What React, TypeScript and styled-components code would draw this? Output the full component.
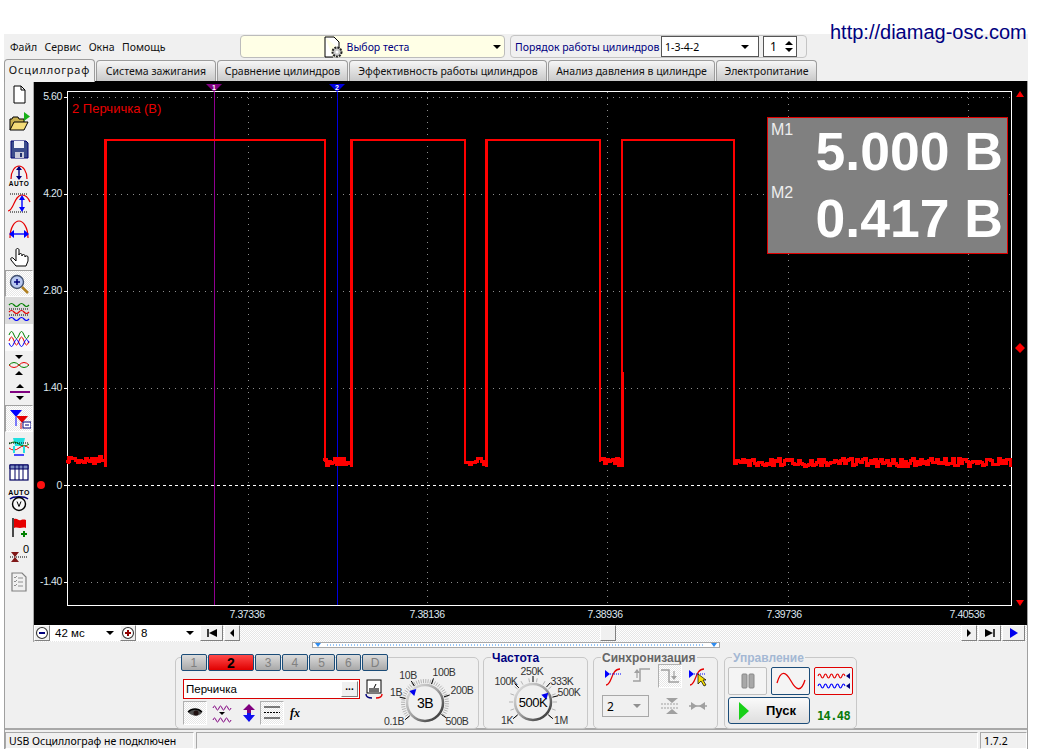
import React from 'react';
import styled, { createGlobalStyle } from 'styled-components';

const UI_FONT = '"Noto Sans", "Liberation Sans", sans-serif';
const ARIAL = '"Liberation Sans", Arial, sans-serif';
const dither = 'repeating-conic-gradient(#ffffff 0 25%, #e6e6e6 0 50%) 0 0 / 2px 2px';

const GlobalStyle = createGlobalStyle`
  html, body { margin: 0; padding: 0; background: #ffffff; }
  body { font-family: ${UI_FONT}; font-size: 10.5px; color: #000; }
  svg { display: block; }
`;

const Page = styled.div`
  position: relative;
  width: 1040px;
  height: 754px;
  overflow: hidden;
  padding-top: 34px;
  box-sizing: border-box;
`;

const SiteLink = styled.div`
  position: absolute;
  left: 830px;
  top: 21px;
  font: 20px ${ARIAL};
  color: #000080;
  z-index: 2;
`;

const Window = styled.div`
  margin-left: 4px;
  width: 1024px;
  height: 715px;
  background: #f0f0f0;
  display: flex;
  flex-direction: column;
`;

/* top row */
const TopRow = styled.div`
  height: 24px;
  display: flex;
  align-items: center;
  padding-top: 1px;
  box-sizing: border-box;
`;

const Menu = styled.div`
  width: 236px;
  display: flex;
  gap: 7.5px;
  padding: 0 0 0 6px;
  box-sizing: border-box;
  color: #111;
`;

const TestCombo = styled.div`
  position: relative;
  width: 265px;
  height: 23px;
  background: #ffffe6;
  border: 1px solid #bcbcbc;
  border-radius: 4px;
  box-sizing: border-box;
  display: flex;
  align-items: center;
  justify-content: center;
  gap: 3px;
  color: #000080;
  padding-right: 14px;
`;

const Arrow = styled.span`
  width: 0;
  height: 0;
  border-left: 4px solid transparent;
  border-right: 4px solid transparent;
  border-top: 4px solid ${p => p.color || '#000'};
`;

const ComboArrow = styled(Arrow)`
  position: absolute;
  right: 3px;
  top: 9px;
`;

const OrderBox = styled.div`
  margin-left: 5px;
  width: 297px;
  height: 23px;
  border: 1px solid #c4c4c4;
  border-radius: 4px;
  box-sizing: border-box;
  display: flex;
  align-items: center;
  padding-left: 4px;
  color: #000080;
`;

const OrderLabel = styled.span`
  width: 146px;
  white-space: nowrap;
`;

const OrderSelect = styled.div`
  width: 98px;
  height: 21px;
  background: #fff;
  border: 1px solid #555;
  box-sizing: border-box;
  display: flex;
  align-items: center;
  justify-content: space-between;
  padding: 0 9px 0 3px;
  color: #000;
`;

const SpinBox = styled.div`
  margin-left: 4px;
  width: 34px;
  height: 21px;
  background: #fff;
  border: 1px solid #555;
  box-sizing: border-box;
  display: flex;
  align-items: center;
  justify-content: space-between;
  padding: 0 3px 0 6px;
  color: #000;
  font-size: 12px;
`;

const SpinArrows = styled.div`
  display: flex;
  flex-direction: column;
  gap: 3px;
`;

const SpinUp = styled(Arrow)`
  display: block;
  border-top: 0;
  border-bottom: 4px solid #000;
`;

const SpinDown = styled(Arrow)`
  display: block;
`;

/* tabs */
const TabBar = styled.div`
  height: 23px;
  display: flex;
  align-items: flex-end;
  position: relative;
`;

const Tab = styled.div<{ $active?: boolean; $w: number }>`
  width: ${p => p.$w}px;
  height: ${p => (p.$active ? 23 : 21)}px;
  margin-right: 1px;
  border: 1px solid #9c9c9c;
  border-bottom: 0;
  border-radius: 4px 4px 0 0;
  box-sizing: border-box;
  display: flex;
  align-items: center;
  justify-content: center;
  white-space: nowrap;
  color: #111;
  background: ${p => (p.$active ? '#f0f0f0' : 'linear-gradient(#f6f6f6, #c9c9c9)')};
  padding-bottom: ${p => (p.$active ? 3 : 0)}px;
  margin-bottom: ${p => (p.$active ? -1 : 0)}px;
  font-size: ${p => (p.$active ? 11 : 10.5)}px;
  letter-spacing: ${p => (p.$active ? 0.8 : 0)}px;
  z-index: ${p => (p.$active ? 1 : 0)};
`;

/* body */
const Body = styled.div`
  flex: 1;
  display: flex;
  flex-direction: column;
  border-left: 1px solid #a0a0a0;
  border-right: 1px solid #a0a0a0;
  min-height: 0;
`;

const Workspace = styled.div`
  display: flex;
  height: 561px;
`;

const SideBar = styled.div`
  width: 29px;
  border-right: 1px solid #a8a8a8;
  box-sizing: border-box;
  display: flex;
  flex-direction: column;
`;

const ToolButton = styled.div<{ $pressed?: boolean; $tone?: string }>`
  height: 27px;
  display: flex;
  align-items: center;
  justify-content: center;
  box-sizing: border-box;
  background: ${p => (p.$pressed ? dither : p.$tone || 'transparent')};
  border-top: ${p => (p.$pressed ? '1px solid #a0a0a0' : '0')};
  border-left: ${p => (p.$pressed ? '1px solid #a0a0a0' : '0')};
  border-right: ${p => (p.$pressed ? '1px solid #fff' : '0')};
  border-bottom: ${p => (p.$pressed ? '1px solid #fff' : '0')};
`;

const ScopeColumn = styled.div`
  flex: 1;
  display: flex;
  flex-direction: column;
  min-width: 0;
`;

const Plot = styled.div`
  position: relative;
  height: 544px;
  background: #000;
`;

const TraceName = styled.div`
  position: absolute;
  left: 38px;
  top: 20px;
  font: 13px ${ARIAL};
  color: #e80000;
`;

const Readout = styled.div`
  position: absolute;
  left: 733px;
  top: 36px;
  width: 241px;
  height: 137px;
  background: #808080;
  border: 1px solid #e00000;
  box-sizing: border-box;
  color: #fff;
  font-family: ${ARIAL};
`;

const ReadoutRow = styled.div`
  height: 67px;
  display: flex;
  justify-content: space-between;
  padding: 0 4px 0 3px;
`;

const ReadoutTag = styled.span<{ $up?: number }>`
  font-size: 16px;
  line-height: 18px;
  padding-top: 3px;
  margin-top: ${p => -(p.$up || 0)}px;
  color: #eeeeee;
`;

const ReadoutValue = styled.span`
  font-size: 53.5px;
  font-weight: 700;
  line-height: 66px;
  white-space: nowrap;
  padding-top: 1px;
`;

/* strip under the plot */
const NavRow = styled.div`
  height: 17px;
  display: flex;
  background: ${dither};
`;

const NavGroup = styled.div<{ $w: number }>`
  width: ${p => p.$w}px;
  height: 16px;
  background: #fff;
  display: flex;
  align-items: center;
  justify-content: space-between;
  padding-right: 6px;
  box-sizing: border-box;
  font: 11.5px ${ARIAL};
`;

const NavLabel = styled.div`
  display: flex;
  align-items: center;
  gap: 4px;
`;

const NavButton = styled.div<{ $w: number }>`
  width: ${p => p.$w}px;
  height: 16px;
  background: #f0f0f0;
  border: 1px solid;
  border-color: #fff #808080 #808080 #fff;
  box-sizing: border-box;
  display: flex;
  align-items: center;
  justify-content: center;
  margin-right: 1px;
`;

const NavSpacer = styled.div<{ $w: number }>`
  width: ${p => p.$w}px;
`;

/* lower panel */
const Splitter = styled.div`
  margin: 0 0 0 307px;
  width: 408px;
  height: 6px;
  border: 1px solid #a8a8a8;
  box-sizing: border-box;
  background: #fff;
  display: flex;
  align-items: center;
`;

const Controls = styled.div`
  height: 82px;
  padding: 9px 0 0 170px;
  box-sizing: border-box;
  display: flex;
  align-items: flex-start;
  border-bottom: 2px solid #a8a8a8;
`;

const Group = styled.div<{ $w: number; $gap: number }>`
  width: ${p => p.$w}px;
  height: 72px;
  margin-right: ${p => p.$gap}px;
  border: 1px solid #c8c8c8;
  border-radius: 5px;
  box-sizing: border-box;
`;

const GroupTitle = styled.div<{ $color: string }>`
  width: fit-content;
  height: 14px;
  margin: -7px 0 0 7px;
  padding: 0 1px;
  background: #f0f0f0;
  font: 700 12px/14px ${ARIAL};
  color: ${p => p.$color};
`;

const ChannelPanel = styled.div`
  display: flex;
  height: 100%;
`;

const ChannelColumn = styled.div`
  width: 212px;
  flex: none;
  padding-left: 5px;
  box-sizing: border-box;
  display: flex;
  flex-direction: column;
`;

const ChannelTabs = styled.div`
  display: flex;
  gap: 1px;
  margin-top: -4px;
`;

const ChannelTab = styled.div<{ $active?: boolean; $w?: number }>`
  width: ${p => p.$w || 26}px;
  height: 17px;
  border: 1px solid #1b4c78;
  border-radius: 2px;
  box-sizing: border-box;
  display: flex;
  align-items: center;
  justify-content: center;
  font: ${p => (p.$active ? 700 : 400)} ${p => (p.$active ? 14 : 12)}px ${ARIAL};
  color: ${p => (p.$active ? '#000' : '#808080')};
  background: ${p => (p.$active ? 'linear-gradient(#ff4a4a, #e00000)' : 'linear-gradient(#dcdcdc, #a8a8a8)')};
`;

const NameRow = styled.div`
  display: flex;
  align-items: center;
  margin: 8px 0 0 2px;
  gap: 4px;
`;

const NameField = styled.div`
  width: 177px;
  height: 20px;
  border: 1px solid #d80000;
  background: #fff;
  box-sizing: border-box;
  display: flex;
  align-items: center;
  justify-content: space-between;
  padding: 0 1px 0 2px;
  font: 11.5px ${ARIAL};
`;

const MoreButton = styled.div`
  width: 17px;
  height: 16px;
  background: #f0f0f0;
  border: 1px solid;
  border-color: #fff #808080 #808080 #fff;
  box-sizing: border-box;
  text-align: center;
  font: 700 10px/10px ${ARIAL};
`;

const IconRow = styled.div`
  display: flex;
  margin: 2px 0 0 2px;
`;

const SmallTool = styled.div<{ $pressed?: boolean; $w: number }>`
  width: ${p => p.$w}px;
  height: 24px;
  display: flex;
  align-items: center;
  justify-content: center;
  box-sizing: border-box;
  background: ${p => (p.$pressed ? dither : 'transparent')};
  border: ${p => (p.$pressed ? '1px solid' : '0')};
  border-color: #b0b0b0 #fff #fff #b0b0b0;
`;

const DialWrap = styled.div`
  margin-left: -4px;
`;

const SyncGrid = styled.div`
  display: grid;
  grid-template-columns: repeat(4, 28px);
  grid-auto-rows: 24px;
  row-gap: 6px;
  padding: 0 0 0 6px;
  margin-top: -1px;
  justify-items: center;
  align-items: center;
`;

const SyncCombo = styled.div`
  grid-column: span 2;
  justify-self: start;
  margin-left: 2px;
  width: 47px;
  height: 22px;
  border: 1px solid #a8a8a8;
  box-sizing: border-box;
  display: flex;
  align-items: center;
  justify-content: space-between;
  padding: 0 7px 0 4px;
  font-size: 12px;
`;

const ControlGrid = styled.div`
  display: grid;
  grid-template-columns: repeat(3, 39px);
  gap: 2px 4px;
  padding: 2px 0 0 3px;
`;

const ModeButton = styled.div<{ $border: string }>`
  height: 28px;
  border: ${p => (p.$border === 'none' ? '1px solid #c0c0c0' : `1.5px solid ${p.$border}`)};
  border-radius: 2px;
  background: #f4f4f4;
  box-sizing: border-box;
  display: flex;
  align-items: center;
  justify-content: center;
`;

const StartButton = styled.div`
  grid-column: span 2;
  height: 27px;
  border: 1.5px solid #1b4c78;
  border-radius: 3px;
  background: linear-gradient(#fafafa, #dedede);
  box-sizing: border-box;
  display: flex;
  align-items: center;
  gap: 15px;
  padding-left: 8px;
  font: 700 13px ${ARIAL};
`;

const Voltage = styled.div`
  align-self: end;
  text-align: center;
  font: 700 12px/16px "DejaVu Sans Mono", "Liberation Mono", monospace;
  letter-spacing: -0.6px;
  color: #0a7a0a;
`;

/* status bar */
const StatusBar = styled.div`
  flex: 1;
  display: flex;
  gap: 2px;
  padding-top: 2px;
  box-sizing: border-box;
`;

const StatusCell = styled.div<{ $w?: number }>`
  ${p => (p.$w ? `width: ${p.$w}px;` : 'flex: 1;')}
  border: 1px solid;
  border-color: #a8a8a8 #fff #fff #a8a8a8;
  box-sizing: border-box;
  padding-left: 3px;
  display: flex;
  align-items: center;
  white-space: nowrap;
`;

/* ---------- drawings ---------- */
const Ico = ({ s = 24, w, h, children }: { s?: number; w?: number; h?: number; children: React.ReactNode }) => (
  <svg width={w || s} height={h || s} viewBox={`0 0 ${w || s} ${h || s}`} fill="none">
    {children}
  </svg>
);

const RED = '#e60000';
const NAVY = '#00007c';
const BLUE = '#0000ff';

const wave = (x: number, y: number, a: number, n: number, step = 4) => {
  let d = `M${x} ${y}`;
  for (let i = 0; i < n; i++) {
    d += `q${step / 2} ${i % 2 ? a : -a} ${step} 0`;
  }
  return d;
};

const sideIcons: React.ReactNode[] = [
  <Ico key="new"><path d="M7 3h7l4 4v13H7z" fill="#fff" stroke="#000" /><path d="M14 3v4h4" stroke="#000" /></Ico>,
  <Ico key="open">
    <path d="M3 20V9h2l1-2h5l1 2h5v3" fill="#c8b050" stroke="#000" />
    <path d="M3 20l4-8h14l-4 8z" fill="#f4dc78" stroke="#000" />
    <path d="M17 2v9l6-4.500z" fill="#18b018" />
  </Ico>,
  <Ico key="save">
    <path d="M4 4h15l2 2v15H4z" fill="#3c4c8c" stroke="#000070" />
    <path d="M7 4h10v7H7z" fill="#f0f0f8" />
    <path d="M8 15h9v6H8z" fill="#c8c8d8" />
    <path d="M13 16h2v4h-2z" fill="#203070" />
  </Ico>,
  <Ico key="auto">
    <path d="M4 15C4 7 8 2 12 2s8 5 8 13" stroke={RED} strokeWidth="1.200" />
    <path d="M12 3v12" stroke={NAVY} strokeWidth="1.400" />
    <path d="M9 6l3-4 3 4zM9 12l3 4 3-4z" fill={NAVY} />
    <text x="12" y="22" textAnchor="middle" fontSize="6.500" fontWeight="700" fontFamily={ARIAL} letterSpacing="0.6" fill="#000">AUTO</text>
  </Ico>,
  <Ico key="offset">
    <path d="M1 20c6 0 6-16 14-16 4 0 6 2 8 7" stroke={RED} strokeWidth="1.200" />
    <path d="M3 3h18M3 21h18" stroke="#000" strokeDasharray="1 1" />
    <path d="M15 6v12" stroke={BLUE} strokeWidth="1.400" />
    <path d="M12 9l3-5 3 5zM12 16l3 5 3-5z" fill={BLUE} />
  </Ico>,
  <Ico key="span">
    <path d="M3 20C3 9 8 3 12 3s9 6 9 17" stroke={RED} strokeWidth="1.200" />
    <path d="M5 16h14" stroke={BLUE} strokeWidth="1.400" />
    <path d="M7 12l-5 4 5 4zM17 12l5 4-5 4z" fill={BLUE} />
  </Ico>,
  <Ico key="hand">
    <path d="M9 21l-5-6c-1-2 1-3 2-2l3 3V5c0-2 3-2 3 0v5c0-2 3-2 3 0v1c0-2 3-2 3 0v1c0-1.500 3-1.500 3 0v4l-2 5z" fill="#fff" stroke="#000" />
  </Ico>,
  <Ico key="zoom">
    <circle cx="10" cy="10" r="6.500" fill="#b8c8f0" stroke="#405070" strokeWidth="1.400" />
    <path d="M7 10h6M10 7v6" stroke={NAVY} strokeWidth="1.500" />
    <path d="M15 15l6 6" stroke="#b08020" strokeWidth="2.500" />
  </Ico>,
  <Ico key="waves">
    <path d={wave(2, 6, 3, 4, 5)} stroke="#008000" strokeWidth="1.200" />
    <path d="M2 10h20M2 16h20" stroke="#000" strokeDasharray="1 1" />
    <path d={wave(2, 13, 3, 4, 5)} stroke={RED} strokeWidth="1.200" />
    <path d={wave(2, 20, 3, 4, 5)} stroke={BLUE} strokeWidth="1.200" />
  </Ico>,
  <Ico key="overlay">
    <path d={wave(2, 9, 7, 4, 5)} stroke="#008000" />
    <path d={wave(2, 15, 8, 4, 5)} stroke={RED} />
    <path d={wave(2, 17, -7, 4, 5)} stroke={BLUE} />
  </Ico>,
  <Ico key="shrink">
    <path d={wave(2, 12, 5, 2, 10)} stroke="#008000" />
    <path d={wave(2, 12, -5, 2, 10)} stroke={RED} />
    <path d="M8 2h8l-4 4zM8 22h8l-4-4z" fill="#000" />
  </Ico>,
  <Ico key="level">
    <path d="M3 12h20" stroke="#800080" strokeWidth="2" />
    <path d="M9 8l4-4 4 4zM9 16l4 4 4-4z" fill="#000" />
  </Ico>,
  <Ico key="cursors">
    <path d="M3 3h12l-6 7z" fill={BLUE} />
    <path d="M9 10v9" stroke={BLUE} />
    <path d="M9 9h12l-6 7z" fill={RED} />
    <path d="M14 16v6" stroke={RED} />
    <rect x="16" y="15" width="8" height="6" fill="#fff" stroke={NAVY} />
    <path d="M18 18h4" stroke={NAVY} />
  </Ico>,
  <Ico key="mid">
    <path d="M6 4h12l-2 8h-8z" fill="#20e0e0" />
    <path d={wave(2, 10, 4, 2, 10)} stroke="#008000" />
    <path d="M2 9h20" stroke="#000" strokeDasharray="1 1" />
    <path d={wave(2, 14, -4, 2, 10)} stroke={RED} />
    <path d="M7 12v7M17 12v7" stroke="#20e0e0" strokeWidth="2" />
    <path d="M7 21h10" stroke={BLUE} strokeWidth="1.400" />
  </Ico>,
  <Ico key="table">
    <rect x="3" y="4" width="18" height="15" fill="#fff" stroke="#000060" strokeWidth="1.200" />
    <path d="M3 4h18v4H3z" fill="#7c8cc0" stroke="#000060" />
    <path d="M8 4v15M12 4v15M16 4v15" stroke="#000060" />
  </Ico>,
  <Ico key="autovolt">
    <text x="12" y="7" textAnchor="middle" fontSize="7" fontWeight="700" fontFamily={ARIAL} letterSpacing="0.5" fill="#000">AUTO</text>
    <path d="M3 11c3-3 15-3 18 0" stroke={NAVY} strokeWidth="1.400" />
    <circle cx="12" cy="16" r="6.500" fill="#f8f8f8" stroke="#000" strokeWidth="1.400" />
    <path d="M10 13.500l2 5 2-5" stroke="#000" />
  </Ico>,
  <Ico key="flag">
    <path d="M6 3v19" stroke="#000" strokeWidth="1.400" />
    <path d="M7 4c4-1 4 2 7 1s5 0 5 0v8c-3-1-4 0-6 0s-3-1-6 0z" fill={RED} />
    <path d="M17 16v6M14 19h6" stroke="#008000" strokeWidth="2" />
  </Ico>,
  <Ico key="zero">
    <path d="M3 15h18" stroke="#000" strokeDasharray="1 1" />
    <path d="M4 10h8l-4 5zM4 20h8l-4-5z" fill="#801818" />
    <text x="19" y="11" textAnchor="middle" fontSize="11" fontFamily={ARIAL} fill="#000">0</text>
  </Ico>,
  <Ico key="report">
    <path d="M5 4h10l4 4v14H5z" fill="#f0f0f0" stroke="#808080" strokeWidth="1.200" />
    <path d="M7 8l1 1 2-2M7 12l1 1 2-2M7 16l1 1 2-2M11 9h5M11 13h5M11 17h5" stroke="#909090" />
  </Ico>,
];

// blocky noise: each sample holds for 2px, like the sampled trace
const noise = (seedStart: number, x0: number, x1: number, base: number, amp: number) => {
  let seed = seedStart;
  let d = `M${x0} ${base}`;
  for (let x = x0 + 2; x <= x1; x += 2) {
    seed = (seed * 16807) % 2147483647;
    const v = ((seed % 1000) / 1000 - 0.5) * amp * 2;
    d += `V${Math.round(base + v)}H${x}`;
  }
  return d;
};

const gridX = [248, 427, 607, 788, 968];
const gridY = [97, 194, 291, 388, 582];
const xLabels = [
  ['7.37336', 247],
  ['7.38136', 427],
  ['7.38936', 605],
  ['7.39736', 784],
  ['7.40536', 967],
] as const;
const yLabels = [
  ['5.60', 100],
  ['4.20', 197],
  ['2.80', 294],
  ['1.40', 391],
  ['0', 489],
  ['-1.40', 585],
] as const;

const highs: [number, number][] = [
  [105, 325],
  [351, 465],
  [486, 600],
  [622, 734],
];
const lows: [number, number, number][] = [
  [67, 105, 460],
  [324, 351, 461],
  [465, 486, 461],
  [600, 622, 461],
  [734, 1012, 462],
];

const ScopeChart = () => (
  <svg width="993" height="544" viewBox="34 81 993 544" fill="none">
    <g stroke="#8c8c8c" strokeDasharray="1 5" shapeRendering="crispEdges">
      {gridX.map(x => <path key={x} d={`M${x} 92V605`} />)}
      {gridY.map(y => <path key={y} d={`M67 ${y}H1012`} />)}
    </g>
    <path d="M67 485H1012" stroke="#ffffff" strokeDasharray="3 3" shapeRendering="crispEdges" />
    <path d="M214.500 91V605" stroke="#900090" shapeRendering="crispEdges" />
    <path d="M337.500 91V605" stroke="#0000e0" shapeRendering="crispEdges" />
    <rect x="67.500" y="91.500" width="944" height="514" stroke="#fff" shapeRendering="crispEdges" />
    <g stroke="#fff" shapeRendering="crispEdges">
      {[97, 194, 291, 388, 485, 582].map(y => <path key={y} d={`M64 ${y}h3`} />)}
    </g>
    <g fill="#dfe6ee" fontFamily={ARIAL} fontSize="10.500" letterSpacing="-0.400">
      {yLabels.map(([t, y]) => <text key={t} x="62" y={y} textAnchor="end">{t}</text>)}
      {xLabels.map(([t, x]) => <text key={t} x={x} y="618" textAnchor="middle">{t}</text>)}
    </g>
    <g stroke="#ff0000" shapeRendering="crispEdges">
      {lows.map(([a, b, y]) => (
        <path key={a} d={noise(a * 97 + 11, a, b, y, 4)} strokeWidth="3" strokeLinejoin="miter" />
      ))}
      {highs.map(([a, b]) => (
        <g key={a}>
          <path d={`M${a} 140H${b}`} strokeWidth="2" />
          <path d={`M${a} ${a === 622 ? 372 : 139}V467`} strokeWidth="3" />
          <path d={`M${b} 139V462`} strokeWidth="2" />
        </g>
      ))}
      <path d="M622 139V372" strokeWidth="2" />
    </g>
    <path d="M206 84h16l-8 8z" fill="#800080" />
    <text x="214" y="90" textAnchor="middle" fontSize="7" fontWeight="700" fontFamily={ARIAL} fill="#fff">1</text>
    <path d="M329 84h16l-8 8z" fill="#0000e0" />
    <text x="337" y="90" textAnchor="middle" fontSize="7" fontWeight="700" fontFamily={ARIAL} fill="#fff">2</text>
    <path d="M1016 97l4-6 4 6zM1016 600l4 6 4-6zM1020 343l5 5-5 5-5-5z" fill="#ff0000" />
    <circle cx="41" cy="485" r="4" fill="#ff1010" />
    <path d="M67 456h3v8h-3z" fill="#ff0000" />
  </svg>
);

const polar = (cx: number, cy: number, r: number, deg: number) => {
  const a = ((deg - 90) * Math.PI) / 180;
  return [cx + r * Math.cos(a), cy + r * Math.sin(a)];
};

interface DialProps {
  id: string;
  box: string;
  w: number;
  h: number;
  cx: number;
  cy: number;
  r: number;
  value: string;
  valueSize: number;
  marks: { deg: number; label: string; x: number; y: number }[];
  minor: number[];
  pointer: number;
}

const Dial = ({ id, box, w, h, cx, cy, r, value, valueSize, marks, minor, pointer }: DialProps) => {
  const [px, py] = polar(cx, cy, r - 4, pointer);
  return (
    <svg width={w} height={h} viewBox={box} fill="none" style={{ overflow: 'visible' }}>
      <defs>
        <linearGradient id={id} x1="0" y1="0" x2="1" y2="1">
          <stop offset="0" stopColor="#e8e8e8" />
          <stop offset="0.500" stopColor="#a0a0a0" />
          <stop offset="1" stopColor="#202020" />
        </linearGradient>
      </defs>
      {minor.map(d => {
        const [a, b] = polar(cx, cy, r + 2, d);
        const [c, e] = polar(cx, cy, r + 6, d);
        return <path key={d} d={`M${a} ${b}L${c} ${e}`} stroke="#b4b4b4" />;
      })}
      {marks.map(m => {
        const [a, b] = polar(cx, cy, r + 2, m.deg);
        const [c, e] = polar(cx, cy, r + 8, m.deg);
        return <path key={m.deg} d={`M${a} ${b}L${c} ${e}`} stroke="#000" />;
      })}
      <circle cx={cx} cy={cy} r={r} stroke={`url(#${id})`} strokeWidth="2.500" fill="#f0f0f0" />
      <path d={`M${px - 5} ${py - 3}l7 -2 -2 7z`} fill="#0000ee" />
      <text x={cx} y={cy + 5} textAnchor="middle" fontSize={valueSize} fontFamily={ARIAL} fill="#000" letterSpacing="-0.500">{value}</text>
      <g fontSize="10.500" fontFamily={ARIAL} fill="#333" letterSpacing="-0.400">
        {marks.map(m => (
          <text key={m.label} x={m.x} y={m.y} textAnchor="middle">{m.label}</text>
        ))}
      </g>
    </svg>
  );
};

const range = (from: number, to: number, step: number) => {
  const out: number[] = [];
  for (let d = from; d <= to; d += step) out.push(d);
  return out;
};

const CircleButton = ({ plus }: { plus?: boolean }) => (
  <Ico s={14}>
    <circle cx="7" cy="7" r="5.500" fill="#fff" stroke="#333" strokeWidth="1.100" />
    <path d={plus ? 'M4 7h6M7 4v6' : 'M4 7h6'} stroke={plus ? '#900000' : NAVY} strokeWidth="2" />
  </Ico>
);

const NavGlyph = ({ kind }: { kind: 'first' | 'prev' | 'next' | 'last' | 'play' }) => (
  <Ico w={14} h={10}>
    {kind === 'first' && <path d="M3 1v8" stroke="#000" strokeWidth="1.500" />}
    {kind === 'first' && <path d="M12 1v8L4 5z" fill="#000" />}
    {kind === 'prev' && <path d="M9 1v8L5 5z" fill="#000" />}
    {kind === 'next' && <path d="M5 1v8l4-4z" fill="#000" />}
    {kind === 'last' && <path d="M2 1v8l8-4z" fill="#000" />}
    {kind === 'last' && <path d="M11 1v8" stroke="#000" strokeWidth="1.500" />}
    {kind === 'play' && <path d="M3 0v10l8-5z" fill="#0000ee" />}
  </Ico>
);

const App = () => (
  <>
    <GlobalStyle />
    <Page>
      <SiteLink>http://diamag-osc.com</SiteLink>
      <Window>
        <TopRow>
          <Menu>
            <span>Файл</span>
            <span>Сервис</span>
            <span>Окна</span>
            <span>Помощь</span>
          </Menu>
          <TestCombo>
            <Ico s={22}>
              <path d="M3 1h9l5 5v7M3 1v20h8" fill="#fff" stroke="#000" />
              <circle cx="15" cy="16" r="4.500" fill="#c8c8c8" stroke="#222" strokeWidth="2" strokeDasharray="2 1" />
              <circle cx="15" cy="16" r="1.500" fill="#fff" />
            </Ico>
            <span>Выбор теста</span>
            <ComboArrow />
          </TestCombo>
          <OrderBox>
            <OrderLabel>Порядок работы цилиндров</OrderLabel>
            <OrderSelect>
              <span>1-3-4-2</span>
              <Arrow />
            </OrderSelect>
            <SpinBox>
              <span>1</span>
              <SpinArrows>
                <SpinUp />
                <SpinDown />
              </SpinArrows>
            </SpinBox>
          </OrderBox>
        </TopRow>

        <TabBar>
          <Tab $active $w={91}>Осциллограф</Tab>
          <Tab $w={120}>Система зажигания</Tab>
          <Tab $w={131}>Сравнение цилиндров</Tab>
          <Tab $w={198}>Эффективность работы цилиндров</Tab>
          <Tab $w={167}>Анализ давления в цилиндре</Tab>
          <Tab $w={101}>Электропитание</Tab>
        </TabBar>

        <Body>
          <Workspace>
            <SideBar>
              {sideIcons.map((icon, i) => (
                <ToolButton key={i} $pressed={i === 7 || i === 12} $tone={i === 8 ? '#dcdcdc' : i === 9 ? '#fafafa' : undefined}>
                  {icon}
                </ToolButton>
              ))}
            </SideBar>
            <ScopeColumn>
              <Plot>
                <ScopeChart />
                <TraceName>2 Перчичка (В)</TraceName>
                <Readout>
                  <ReadoutRow>
                    <ReadoutTag>M1</ReadoutTag>
                    <ReadoutValue>5.000 В</ReadoutValue>
                  </ReadoutRow>
                  <ReadoutRow>
                    <ReadoutTag $up={4}>M2</ReadoutTag>
                    <ReadoutValue>0.417 В</ReadoutValue>
                  </ReadoutRow>
                </Readout>
              </Plot>
              <NavRow>
                <NavGroup $w={86}>
                  <NavLabel><NavButton $w={16}><CircleButton /></NavButton>42 мс</NavLabel>
                  <Arrow />
                </NavGroup>
                <NavGroup $w={80}>
                  <NavLabel><NavButton $w={16}><CircleButton plus /></NavButton>8</NavLabel>
                  <Arrow />
                </NavGroup>
                <NavButton $w={23}><NavGlyph kind="first" /></NavButton>
                <NavButton $w={16}><NavGlyph kind="prev" /></NavButton>
                <NavSpacer $w={359} />
                <NavButton $w={16} />
                <NavSpacer $w={344} />
                <NavButton $w={16}><NavGlyph kind="next" /></NavButton>
                <NavButton $w={23}><NavGlyph kind="last" /></NavButton>
                <NavButton $w={23}><NavGlyph kind="play" /></NavButton>
              </NavRow>
            </ScopeColumn>
          </Workspace>

          <Splitter>
            <svg width="406" height="4" fill="none">
              <path d="M2 0h6l-3 4zM398 0h6l-3 4z" fill="#2f8cf0" />
              <path d="M14 2H392" stroke="#2f8cf0" strokeDasharray="1 2" />
            </svg>
          </Splitter>

          <Controls>
            <Group $w={304} $gap={4}>
              <ChannelPanel>
                <ChannelColumn>
                  <ChannelTabs>
                    <ChannelTab $w={26}>1</ChannelTab>
                    <ChannelTab $active $w={47}>2</ChannelTab>
                    <ChannelTab>3</ChannelTab>
                    <ChannelTab>4</ChannelTab>
                    <ChannelTab>5</ChannelTab>
                    <ChannelTab>6</ChannelTab>
                    <ChannelTab>D</ChannelTab>
                  </ChannelTabs>
                  <NameRow>
                    <NameField>
                      <span>Перчичка</span>
                      <MoreButton>...</MoreButton>
                    </NameField>
                    <Ico s={20}>
                      <rect x="3" y="1" width="14" height="13" fill="#fff" stroke="#000" />
                      <path d="M5 9h10v4H5z" fill="#707070" />
                      <path d="M10 9L12 5" stroke="#000" />
                      <path d="M2 15c0 3 3 4 6 4" stroke={NAVY} strokeWidth="1.400" />
                      <path d="M18 15c0 3-3 4-6 4" stroke={RED} strokeWidth="1.400" />
                    </Ico>
                  </NameRow>
                  <IconRow>
                    <SmallTool $pressed $w={24}>
                      <Ico s={18}>
                        <path d="M2 8c4-4 10-4 14 0-2 5-10 5-14 0z" fill="#505050" />
                        <circle cx="10" cy="9" r="2.500" fill="#201010" />
                        <path d="M2 8c4-4 10-4 14 0" stroke="#000" strokeWidth="1.400" />
                      </Ico>
                    </SmallTool>
                    <SmallTool $w={30}>
                      <Ico s={22}>
                        <path d={wave(2, 6, 4, 6, 3)} stroke="#800080" />
                        <path d="M8 10h6l-3 3z" fill="#000" />
                        <path d={wave(2, 18, 4, 6, 3)} stroke="#800080" />
                      </Ico>
                    </SmallTool>
                    <SmallTool $w={23}>
                      <Ico s={22}>
                        <path d="M11 2l-6 6h4v4h4V8h4z" fill="#800080" />
                        <path d="M11 20l-6-7h4v-2h4v2h4z" fill="#1010f0" />
                      </Ico>
                    </SmallTool>
                    <SmallTool $pressed $w={24}>
                      <Ico s={20}>
                        <path d="M2 4h16M2 15h16" stroke="#000" />
                        <path d="M2 9.500h16" stroke="#000" strokeDasharray="2 1" />
                      </Ico>
                    </SmallTool>
                    <SmallTool $w={22}>
                      <Ico s={18}>
                        <text x="9" y="13" textAnchor="middle" fontSize="12" fontStyle="italic" fontWeight="700" fontFamily='"Liberation Serif", serif' fill="#000">fx</text>
                      </Ico>
                    </SmallTool>
                  </IconRow>
                </ChannelColumn>
                <DialWrap>
                  <Dial
                    id="voltDial"
                    box="388 658 90 70"
                    w={90}
                    h={70}
                    cx={429}
                    cy={703}
                    r={18}
                    value="3В"
                    valueSize={14}
                    pointer={-50}
                    minor={range(-130, 125, 6)}
                    marks={[
                      { deg: -130, label: '0.1В', x: 398, y: 725 },
                      { deg: -77, label: '1В', x: 400, y: 696 },
                      { deg: -32, label: '10В', x: 412, y: 679 },
                      { deg: 19, label: '100В', x: 448, y: 676 },
                      { deg: 72, label: '200В', x: 466, y: 694 },
                      { deg: 125, label: '500В', x: 461, y: 725 },
                    ]}
                  />
                </DialWrap>
              </ChannelPanel>
            </Group>

            <Group $w={105} $gap={5}>
              <GroupTitle $color="#000080">Частота</GroupTitle>
              <Dial
                id="freqDial"
                box="484 665 103 63"
                w={103}
                h={63}
                cx={533}
                cy={702}
                r={18}
                value="500K"
                valueSize={13}
                pointer={72}
                minor={range(-130, 130, 20)}
                marks={[
                  { deg: -130, label: '1K', x: 507, y: 724 },
                  { deg: -45, label: '100K', x: 506, y: 685 },
                  { deg: 0, label: '250K', x: 532, y: 675 },
                  { deg: 42, label: '333K', x: 562, y: 685 },
                  { deg: 76, label: '500K', x: 569, y: 696 },
                  { deg: 130, label: '1M', x: 561, y: 724 },
                ]}
              />
            </Group>

            <Group $w={125} $gap={6}>
              <GroupTitle $color="#666666">Синхронизация</GroupTitle>
              <SyncGrid>
                <Ico s={22}>
                  <path d="M3 20c6 0 5-16 14-16" stroke={RED} strokeWidth="1.300" />
                  <path d="M3 9h16" stroke={BLUE} strokeDasharray="1 1" />
                  <path d="M2 5v8l5-4z" fill={BLUE} />
                </Ico>
                <Ico s={22}>
                  <path d="M2 16h7V4h10" stroke="#a0a0a0" strokeWidth="1.500" />
                  <path d="M6 5v8" stroke="#a0a0a0" strokeWidth="1.200" />
                  <path d="M3 8l3-4 3 4z" fill="#a0a0a0" />
                </Ico>
                <SmallTool $pressed $w={24}>
                  <Ico s={22}>
                    <path d="M2 5h8v12h10" stroke="#a0a0a0" strokeWidth="1.500" />
                    <path d="M15 6v8" stroke="#a0a0a0" strokeWidth="1.200" />
                    <path d="M12 11l3 4 3-4z" fill="#a0a0a0" />
                  </Ico>
                </SmallTool>
                <Ico s={22}>
                  <path d="M3 20c6 0 5-16 14-16" stroke={RED} strokeWidth="1.300" />
                  <path d="M3 9h16" stroke={BLUE} strokeDasharray="1 1" />
                  <path d="M2 5v8l5-4z" fill={BLUE} />
                  <path d="M11 9v10l3-3 3 5 2-1-3-5h3z" fill="#f8e000" stroke="#000" strokeWidth="0.700" />
                </Ico>
                <SyncCombo>
                  <span>2</span>
                  <Arrow color="#909090" />
                </SyncCombo>
                <Ico s={22}>
                  <path d="M7 3h12l-6 5zM7 19h12l-6-5z" fill="#a0a0a0" />
                  <path d="M2 9h18M2 13h18" stroke="#a0a0a0" strokeDasharray="2 1" />
                </Ico>
                <Ico s={22}>
                  <path d="M2 11h18" stroke="#a0a0a0" strokeWidth="1.500" />
                  <path d="M4 7v8l6-4zM18 7v8l-6-4z" fill="#a0a0a0" />
                </Ico>
              </SyncGrid>
            </Group>

            <Group $w={133} $gap={0}>
              <GroupTitle $color="#a4b8d4">Управление</GroupTitle>
              <ControlGrid>
                <ModeButton $border="none">
                  <Ico s={20}>
                    <rect x="4" y="3" width="5" height="14" rx="1" fill="#a8a8a8" stroke="#888" />
                    <rect x="11" y="3" width="5" height="14" rx="1" fill="#a8a8a8" stroke="#888" />
                  </Ico>
                </ModeButton>
                <ModeButton $border="#1b4c78">
                  <Ico w={32} h={22}>
                    <path d="M2 13C6 -1 11 2 16 11s10 12 14 -1" stroke={RED} strokeWidth="1.300" />
                  </Ico>
                </ModeButton>
                <ModeButton $border="#e00000">
                  <Ico w={35} h={24}>
                    <path d={wave(2, 7, 4, 9, 3)} stroke={RED} strokeWidth="1.100" />
                    <path d="M34 4v6l-4-3z" fill={NAVY} />
                    <path d={wave(2, 17, 4, 9, 3)} stroke={BLUE} strokeWidth="1.100" />
                    <path d="M34 14v6l-4-3z" fill={NAVY} />
                  </Ico>
                </ModeButton>
                <StartButton>
                  <Ico w={14} h={20}>
                    <path d="M2 1v18l10-9z" fill="#18d018" />
                  </Ico>
                  Пуск
                </StartButton>
                <Voltage>14.48</Voltage>
              </ControlGrid>
            </Group>
          </Controls>

          <StatusBar>
            <StatusCell $w={189}>USB Осциллограф не подключен</StatusCell>
            <StatusCell />
            <StatusCell $w={47}>1.7.2</StatusCell>
          </StatusBar>
        </Body>
      </Window>
    </Page>
  </>
);

export default App;
